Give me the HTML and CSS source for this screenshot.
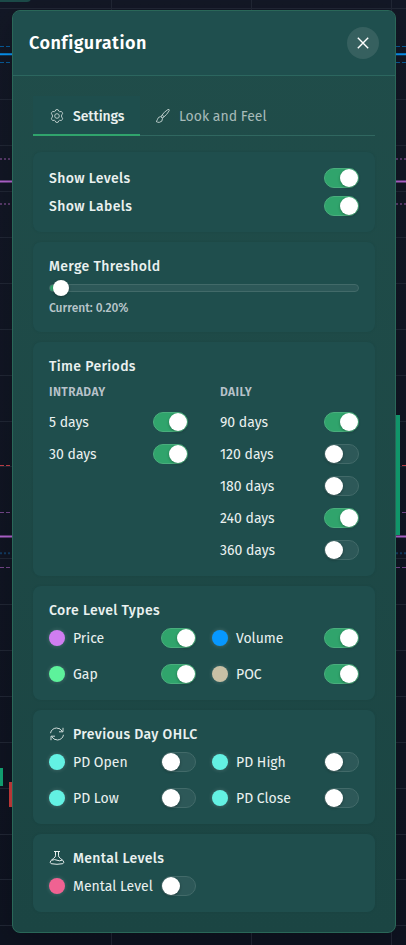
FILE: index.html
```
<!DOCTYPE html>
<html lang="en">
<head>
<meta charset="utf-8">
<title>Configuration</title>
<link rel="stylesheet" href="styles.css">
</head>
<body>
<svg class="chart" width="406" height="945" viewBox="0 0 406 945" aria-hidden="true">
  <path class="grid" d="M0 8.5H406M0 99.5H406M0 145.5H406M0 191.5H406M0 237.5H406M0 283.5H406M0 329.5H406M0 375.5H406M0 421.5H406M0 466.5H406M0 558.5H406M0 604.5H406M0 650.5H406M0 696.5H406M0 742.5H406M0 788.5H406M0 834.5H406M0 879.5H406M0 925.5H406M111.5 0V945M251.5 0V945M391.5 0V945"/>
  <rect x="-10" y="-10" width="41" height="12" rx="4" fill="#1c4b49"/>
  <path d="M0 54.3H406" stroke="#0794f5" stroke-width="2"/>
  <path class="dash" d="M0 46.5H406M0 62.5H406" stroke="#075b99"/>
  <path d="M0 181.5H406M0 536.5H406" stroke="#b264cf" stroke-width="2"/>
  <path class="dots" d="M0 159H406M0 204H406" stroke="#573969"/>
  <path class="dash" d="M0 465.5H406" stroke="#c43f48"/>
  <path class="dash" d="M0 512.5H406M0 567.5H406" stroke="#74478a"/>
  <path class="dots" d="M0 553.3H406" stroke="#123b61"/>
  <path d="M396 415h4v120h-4zM0 768h3v18H0z" fill="#12a474"/>
  <path d="M9 782h4v25H9z" fill="#cb3c3c"/>
</svg>
<main class="modal">
  <header class="head">
    <h1>Configuration</h1>
    <button class="close" aria-label="Close"><svg width="12" height="12" viewBox="0 0 12 12"><path d="M.8.8l10.4 10.4M11.2.8.8 11.2"/></svg></button>
  </header>
  <div class="body">
    <nav class="tabs">
      <a class="tab active"><svg class="icon" viewBox="0 0 16 16"><path d="M6.2 3.200Q6.300 1.500 8 1.500t1.800 1.700q.4.5 1 .5 1.600-.8 2.500.7t-.6 2.500q-.4 1.100 0 2.200 1.500 1 .6 2.500t-2.500.7q-.6 0-1 .5Q9.700 14.500 8 14.500t-1.800-1.700q-.4-.5-1-.5-1.600.8-2.500-.7t.6-2.500q.4-1.100 0-2.200-1.500-1-.6-2.500t2.500-.7q.6 0 1-.5z"/><circle cx="8" cy="8" r="2.300"/></svg>Settings</a>
      <a class="tab"><svg class="icon" viewBox="0 0 16 16"><path d="M6.100 8.300Q9.200 3.600 13 1.500q1.600-.5 1.200 1.200-2 3.800-6.400 7.200zM5.700 8.600l1.800 1.700q.3 3.700-3.300 4.100-1.700 0-3.200-1 1.500-.6 1.500-2.100.5-2.500 3.200-2.700zM7.300 7l2 2"/></svg>Look and Feel</a>
    </nav>

    <section class="card">
      <div class="rows tight">
        <div class="row strong"><span>Show Levels</span><i class="toggle on"></i></div>
        <div class="row strong"><span>Show Labels</span><i class="toggle on"></i></div>
      </div>
    </section>

    <section class="card">
      <h2>Merge Threshold</h2>
      <div class="slider"><i class="thumb"></i></div>
      <p class="hint">Current: 0.20%</p>
    </section>

    <section class="card">
      <h2>Time Periods</h2>
      <div class="periods">
        <div class="rows">
          <h3>INTRADAY</h3>
          <div class="row"><span>5 days</span><i class="toggle on"></i></div>
          <div class="row"><span>30 days</span><i class="toggle on"></i></div>
        </div>
        <div class="rows">
          <h3>DAILY</h3>
          <div class="row"><span>90 days</span><i class="toggle on"></i></div>
          <div class="row"><span>120 days</span><i class="toggle"></i></div>
          <div class="row"><span>180 days</span><i class="toggle"></i></div>
          <div class="row"><span>240 days</span><i class="toggle on"></i></div>
          <div class="row"><span>360 days</span><i class="toggle"></i></div>
        </div>
      </div>
    </section>

    <section class="card">
      <h2>Core Level Types</h2>
      <div class="types">
        <div class="row"><b class="dot price"></b><span>Price</span><i class="toggle on"></i></div>
        <div class="row"><b class="dot volume"></b><span>Volume</span><i class="toggle on"></i></div>
        <div class="row"><b class="dot gap"></b><span>Gap</span><i class="toggle on"></i></div>
        <div class="row"><b class="dot poc"></b><span>POC</span><i class="toggle on"></i></div>
      </div>
    </section>

    <section class="card">
      <h2><svg class="icon refresh" viewBox="0 0 16 16"><path d="M1.500 7.200Q2.500 2.400 7.500 2q4 0 6 3.600M14 1.800v4h-4M14.500 8.800Q13.500 13.600 8.500 14q-4 0-6-3.600M2 14.200v-4h4"/></svg>Previous Day OHLC</h2>
      <div class="types">
        <div class="row"><b class="dot"></b><span>PD Open</span><i class="toggle"></i></div>
        <div class="row"><b class="dot"></b><span>PD High</span><i class="toggle"></i></div>
        <div class="row"><b class="dot"></b><span>PD Low</span><i class="toggle"></i></div>
        <div class="row"><b class="dot"></b><span>PD Close</span><i class="toggle"></i></div>
      </div>
    </section>

    <section class="card">
      <h2><svg class="icon bright" viewBox="0 0 16 16"><path d="M5 1.500h6M6.500 1.500v4.300q0 1.200-1.800 2.500L2 10.500Q.3 12.600 2.200 13.700 8 14.900 13.800 13.700q1.900-1.100.2-3.200l-2.700-2.200Q9.500 7 9.500 5.800V1.500M3 10.200q2.500-1.200 5 0t5 0"/></svg>Mental Levels</h2>
      <div class="types">
        <div class="row"><b class="dot mental"></b><span>Mental Level</span><i class="toggle"></i></div>
      </div>
    </section>
  </div>
</main>
</body>
</html>
```
FILE: styles.css
```
* { box-sizing: border-box; }

body {
  margin: 0;
  height: 945px;
  overflow: hidden;
  background: linear-gradient(#131826, #0e1320);
  color: #eaf1f0;
  font: 400 14px/16px "Fira Sans", "Noto Sans", sans-serif;
}

h1, h2, h3, p { margin: 0; }

.chart { position: absolute; inset: 0; }
.grid { stroke: #212735; fill: none; }
.dash { stroke-dasharray: 4 2; }
.dots { stroke-width: 2; stroke-dasharray: 2 2; }

.modal {
  position: relative;
  width: 384px;
  height: 923px;
  margin: 10px 0 0 12px;
  border: 1px solid #2a6758;
  border-radius: 8px;
  background: linear-gradient(#204d4a, #1b4543);
  box-shadow: 0 8px 32px rgba(0, 0, 0, .2);
  overflow: hidden;
}

.head {
  display: flex;
  align-items: center;
  justify-content: space-between;
  height: 65px;
  padding: 0 16px;
  background: #1f4f4e;
  border-bottom: 1px solid #2c665f;
}

h1 { font-size: 18px; line-height: 24px; font-weight: 600; letter-spacing: .5px; color: #fff; }

.close {
  display: grid;
  place-items: center;
  width: 32px;
  height: 32px;
  padding: 0;
  border: 0;
  border-radius: 50%;
  background: #36605f;
}
.close svg { fill: none; stroke: #fff; stroke-width: 1.4; }

.body { display: flex; flex-direction: column; gap: 10px; padding: 20px; }

.tabs { display: flex; height: 40px; margin-bottom: 6px; border-bottom: 1px solid #306760; }
.tab { display: flex; align-items: center; gap: 8px; height: 40px; padding: 1px 15px 0 16px; color: #a7bbb9; }
.tab.active {
  width: 107px;
  color: #eaf1f0;
  font-weight: 500;
  letter-spacing: -.1px;
  background: #1e4e4d;
  box-shadow: inset 0 -2px #30a46c;
}
.tab:not(.active) { margin-left: -1px; }

.icon { width: 16px; height: 16px; flex: none; fill: none; stroke: #b9cac8; stroke-width: 1; }
.icon.refresh { stroke: #d0dcda; }
.icon.bright { stroke: #e6eeed; }
.tab .icon { margin-top: -1px; }

.card {
  padding: 16px;
  border-radius: 8px;
  background: #1f4e4d;
  box-shadow: 0 0 2px rgba(20, 60, 58, .25);
}

h2 { display: flex; align-items: center; gap: 8px; height: 16px; padding-top: 2px; margin-bottom: 10px; font-size: 14px; line-height: 16px; font-weight: 500; letter-spacing: .35px; }
h2 .icon { margin-top: -2px; }
h3 { height: 16px; font-size: 12px; line-height: 16px; font-weight: 600; letter-spacing: .4px; color: #b8c2ca; }

.rows { display: flex; flex-direction: column; gap: 12px; }
.tight { gap: 8px; }
.row { display: flex; align-items: center; height: 20px; white-space: nowrap; }
.row span { padding-top: 2px; }
.row .toggle { margin-left: auto; }
.strong { font-weight: 500; letter-spacing: .35px; }
.periods { display: grid; grid-template-columns: 1fr 1fr; gap: 32px; }
.types { display: grid; grid-template-columns: 1fr 1fr; gap: 16px; }

.toggle {
  flex: none;
  width: 35px;
  height: 20px;
  padding: 0;
  border: 1px solid #426a69;
  border-radius: 10px;
  background: #2d5858;
}
.toggle::before {
  content: "";
  display: block;
  width: 18px;
  height: 18px;
  border-radius: 50%;
  background: #fff;
  box-shadow: 0 1px 3px rgba(0, 0, 0, .3);
}
.toggle.on { background: #30a46c; border-color: #4aae7d; }
.toggle.on::before { margin-left: 15px; }

.dot {
  width: 16px;
  height: 16px;
  margin-right: 8px;
  border-radius: 50%;
  background: #63f1e3;
  box-shadow: 0 0 4px rgba(255, 255, 255, .2);
}
.price { background: #cf7df0; }
.volume { background: #0798ff; }
.gap { background: #5df29b; }
.poc { background: #c8c0a5; }
.mental { background: #f06292; }

.slider {
  height: 8px;
  margin-bottom: 8px;
  border: 1px solid #426a69;
  border-radius: 4px;
  background: linear-gradient(90deg, #30a46c 10px, #2d5858 10px);
}
.thumb {
  display: block;
  width: 16px;
  height: 16px;
  margin: -5px 0 0 3px;
  border-radius: 50%;
  background: #fff;
  box-shadow: 0 1px 3px rgba(0, 0, 0, .3);
}
.hint { font-size: 12px; font-weight: 500; color: #b8c5ca; }
```
